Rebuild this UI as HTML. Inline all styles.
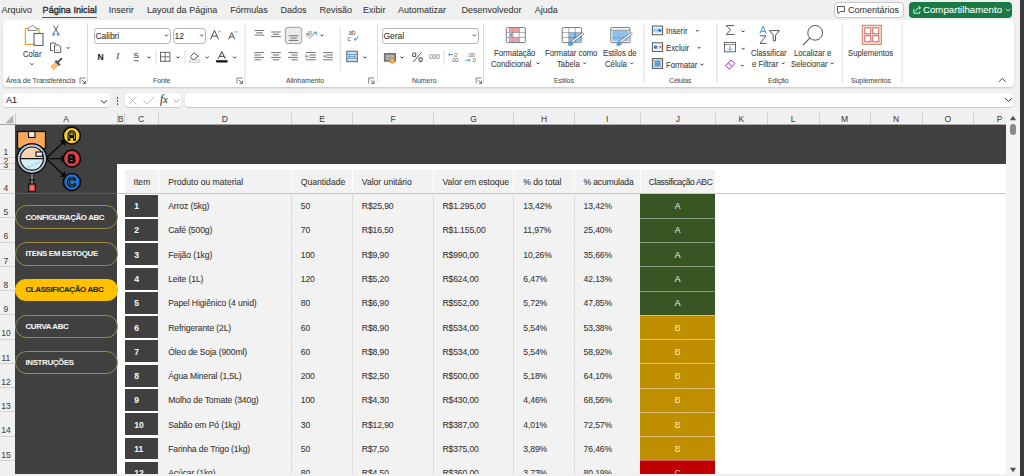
<!DOCTYPE html>
<html><head><meta charset="utf-8"><style>
html,body{margin:0;padding:0;}
body{width:1024px;height:476px;overflow:hidden;position:relative;background:#f0f0f0;font-family:"Liberation Sans", sans-serif;}
.t{position:absolute;white-space:pre;line-height:1;-webkit-text-stroke:0.08px currentColor;}
.r{position:absolute;}
</style></head><body>
<div class="t" style="left:1.6px;top:6.28px;font-size:9px;font-weight:400;color:#3b3b3b;">Arquivo</div>
<div class="t" style="left:42.6px;top:6.28px;font-size:9px;font-weight:400;color:#2a2a2a;letter-spacing:0.05px;-webkit-text-stroke:0.35px #2a2a2a;">Página Inicial</div>
<div class="t" style="left:108.7px;top:6.28px;font-size:9px;font-weight:400;color:#3b3b3b;">Inserir</div>
<div class="t" style="left:147.1px;top:6.28px;font-size:9px;font-weight:400;color:#3b3b3b;">Layout da Página</div>
<div class="t" style="left:230.3px;top:6.28px;font-size:9px;font-weight:400;color:#3b3b3b;">Fórmulas</div>
<div class="t" style="left:280.5px;top:6.28px;font-size:9px;font-weight:400;color:#3b3b3b;">Dados</div>
<div class="t" style="left:319.5px;top:6.28px;font-size:9px;font-weight:400;color:#3b3b3b;">Revisão</div>
<div class="t" style="left:363px;top:6.28px;font-size:9px;font-weight:400;color:#3b3b3b;">Exibir</div>
<div class="t" style="left:398px;top:6.28px;font-size:9px;font-weight:400;color:#3b3b3b;">Automatizar</div>
<div class="t" style="left:461.5px;top:6.28px;font-size:9px;font-weight:400;color:#3b3b3b;">Desenvolvedor</div>
<div class="t" style="left:534.8px;top:6.28px;font-size:9px;font-weight:400;color:#3b3b3b;">Ajuda</div>
<div class="r" style="left:42.3px;top:16.6px;width:54.8px;height:1.6px;background:#1e7145;border-radius:1px;"></div>
<div class="r" style="left:833.5px;top:2px;width:70px;height:15.5px;background:#fff;border:1px solid #c9c9c9;border-radius:4px;box-sizing:border-box;"></div>
<svg class="r" style="left:836px;top:5px" width="10" height="10" viewBox="0 0 10 10"><path d="M1.5 1.5h7v5h-4l-2.5 2v-2h-0.5z" fill="none" stroke="#444" stroke-width="0.9"/></svg>
<div class="t" style="left:847.6px;top:5.09px;font-size:9.7px;font-weight:400;color:#3a3a3a;transform:scaleX(0.93);transform-origin:0 0;">Comentários</div>
<div class="r" style="left:909.4px;top:2px;width:102.2px;height:15.6px;background:#1a7a43;border-radius:4px;"></div>
<svg class="r" style="left:912.5px;top:5px" width="9" height="9" viewBox="0 0 9 9"><path d="M0.8 4.2v4h6v-1.8" fill="none" stroke="#fff" stroke-width="0.9"/><path d="M2.8 6.2c0-2.4 1.8-3.4 4.2-3.4M5.8 1.2l1.8 1.6-1.8 1.6" fill="none" stroke="#fff" stroke-width="0.9"/></svg>
<div class="t" style="left:922.8px;top:5.02px;font-size:9.9px;font-weight:400;color:#fff;transform:scaleX(0.98);transform-origin:0 0;">Compartilhamento</div>
<svg class="r" style="left:1005px;top:8px" width="6" height="4" viewBox="0 0 6 4"><path d="M0.8 0.8l2.2 2.2 2.2-2.2" fill="none" stroke="#fff" stroke-width="0.9"/></svg>
<div class="r" style="left:2.5px;top:20px;width:1011px;height:66.5px;background:#fff;border-radius:4.5px;box-shadow:0 1px 2px rgba(0,0,0,0.18);"></div>
<div class="r" style="left:2.8px;top:93px;width:107.2px;height:14px;background:#fff;border-radius:4px;box-shadow:0 0.6px 1px rgba(0,0,0,0.16);"></div>
<div class="t" style="left:6px;top:95.98px;font-size:9px;font-weight:400;color:#222;">A1</div>
<svg class="r" style="left:100px;top:98.5px" width="8" height="6" viewBox="0 0 8 6"><path d="M1 1.2l3 3 3-3" fill="none" stroke="#333" stroke-width="1"/></svg>
<div class="r" style="left:116.5px;top:97.2px;width:1.7px;height:1.7px;background:#333;border-radius:1px;"></div>
<div class="r" style="left:116.5px;top:100.2px;width:1.7px;height:1.7px;background:#333;border-radius:1px;"></div>
<div class="r" style="left:116.5px;top:103.2px;width:1.7px;height:1.7px;background:#333;border-radius:1px;"></div>
<div class="r" style="left:124.7px;top:93px;width:56.7px;height:14px;background:#fff;border-radius:4px;box-shadow:0 0.6px 1px rgba(0,0,0,0.16);"></div>
<svg class="r" style="left:127px;top:95px" width="56" height="11" viewBox="0 0 56 11"><path d="M1.5 1.5l8 8M9.5 1.5l-8 8" stroke="#bdbdbd" stroke-width="0.9" fill="none"/><path d="M16.5 5.5l3.5 3.5 7.5-7.5" stroke="#bdbdbd" stroke-width="0.9" fill="none"/><path d="M46.8 4.4l2.8 2.8 2.8-2.8" stroke="#999" stroke-width="0.9" fill="none"/></svg>
<div class="t" style="left:160px;top:94.47px;font-size:11.5px;font-weight:400;color:#333;font-family:'Liberation Serif',serif;font-style:italic;">f<span style="font-size:10px">x</span></div>
<div class="r" style="left:185.3px;top:93px;width:827.7px;height:14px;background:#fff;border-radius:4px;box-shadow:0 0.6px 1px rgba(0,0,0,0.16);"></div>
<svg class="r" style="left:1004px;top:97px" width="9" height="6" viewBox="0 0 9 6"><path d="M1 1.2l3.5 3.3 3.5-3.3" fill="none" stroke="#333" stroke-width="1"/></svg>
<div class="r" style="left:0px;top:113px;width:1005.5px;height:12px;background:#f0f0f0;"></div>
<svg class="r" style="left:4px;top:114px" width="10" height="10" viewBox="0 0 10 10"><path d="M1 9.3L9.3 1V9.3z" fill="#b5b5b5"/></svg>
<div class="r" style="left:116.5px;top:113px;width:1px;height:12px;background:#cfcfcf;"></div>
<div class="t" style="left:15px;width:102px;text-align:center;top:115.40px;font-size:8.5px;font-weight:400;color:#444;">A</div>
<div class="r" style="left:123.5px;top:113px;width:1px;height:12px;background:#cfcfcf;"></div>
<div class="t" style="left:117px;width:7px;text-align:center;top:115.40px;font-size:8.5px;font-weight:400;color:#444;">B</div>
<div class="r" style="left:157.5px;top:113px;width:1px;height:12px;background:#cfcfcf;"></div>
<div class="t" style="left:124px;width:34px;text-align:center;top:115.40px;font-size:8.5px;font-weight:400;color:#444;">C</div>
<div class="r" style="left:291.0px;top:113px;width:1px;height:12px;background:#cfcfcf;"></div>
<div class="t" style="left:158px;width:133.5px;text-align:center;top:115.40px;font-size:8.5px;font-weight:400;color:#444;">D</div>
<div class="r" style="left:352.0px;top:113px;width:1px;height:12px;background:#cfcfcf;"></div>
<div class="t" style="left:291.5px;width:61.0px;text-align:center;top:115.40px;font-size:8.5px;font-weight:400;color:#444;">E</div>
<div class="r" style="left:433.0px;top:113px;width:1px;height:12px;background:#cfcfcf;"></div>
<div class="t" style="left:352.5px;width:81.0px;text-align:center;top:115.40px;font-size:8.5px;font-weight:400;color:#444;">F</div>
<div class="r" style="left:513.0px;top:113px;width:1px;height:12px;background:#cfcfcf;"></div>
<div class="t" style="left:433.5px;width:80.0px;text-align:center;top:115.40px;font-size:8.5px;font-weight:400;color:#444;">G</div>
<div class="r" style="left:574.0px;top:113px;width:1px;height:12px;background:#cfcfcf;"></div>
<div class="t" style="left:513.5px;width:61.0px;text-align:center;top:115.40px;font-size:8.5px;font-weight:400;color:#444;">H</div>
<div class="r" style="left:639.5px;top:113px;width:1px;height:12px;background:#cfcfcf;"></div>
<div class="t" style="left:574.5px;width:65.5px;text-align:center;top:115.40px;font-size:8.5px;font-weight:400;color:#444;">I</div>
<div class="r" style="left:715.0px;top:113px;width:1px;height:12px;background:#cfcfcf;"></div>
<div class="t" style="left:640px;width:75.5px;text-align:center;top:115.40px;font-size:8.5px;font-weight:400;color:#444;">J</div>
<div class="r" style="left:766.5px;top:113px;width:1px;height:12px;background:#cfcfcf;"></div>
<div class="t" style="left:715.5px;width:51.5px;text-align:center;top:115.40px;font-size:8.5px;font-weight:400;color:#444;">K</div>
<div class="r" style="left:818.5px;top:113px;width:1px;height:12px;background:#cfcfcf;"></div>
<div class="t" style="left:767px;width:52px;text-align:center;top:115.40px;font-size:8.5px;font-weight:400;color:#444;">L</div>
<div class="r" style="left:869.5px;top:113px;width:1px;height:12px;background:#cfcfcf;"></div>
<div class="t" style="left:819px;width:51px;text-align:center;top:115.40px;font-size:8.5px;font-weight:400;color:#444;">M</div>
<div class="r" style="left:921.5px;top:113px;width:1px;height:12px;background:#cfcfcf;"></div>
<div class="t" style="left:870px;width:52px;text-align:center;top:115.40px;font-size:8.5px;font-weight:400;color:#444;">N</div>
<div class="r" style="left:973.2px;top:113px;width:1px;height:12px;background:#cfcfcf;"></div>
<div class="t" style="left:922px;width:51.700000000000045px;text-align:center;top:115.40px;font-size:8.5px;font-weight:400;color:#444;">O</div>
<div class="t" style="left:973.7px;width:52px;text-align:center;top:115.40px;font-size:8.5px;font-weight:400;color:#444;">P</div>
<div class="r" style="left:14.5px;top:113px;width:1px;height:12px;background:#cfcfcf;"></div>
<div class="r" style="left:0px;top:124px;width:1005.5px;height:1px;background:#a6a6a6;"></div>
<div class="r" style="left:0px;top:125px;width:15px;height:351px;background:#f0f0f0;"></div>
<div class="r" style="left:0;top:125px;width:15px;height:32.5px;overflow:hidden;"><div class="t" style="left:0;width:11.8px;text-align:center;top:22.90px;font-size:8.5px;color:#444;">1</div></div>
<div class="r" style="left:0px;top:157.0px;width:15px;height:1px;background:#d2d2d2;"></div>
<div class="r" style="left:0;top:157.5px;width:15px;height:5.5px;overflow:hidden;"><div class="t" style="left:0;width:11.8px;text-align:center;top:-0.20px;font-size:8.5px;color:#444;">2</div></div>
<div class="r" style="left:0px;top:162.5px;width:15px;height:1px;background:#d2d2d2;"></div>
<div class="r" style="left:0;top:163px;width:15px;height:6px;overflow:hidden;"><div class="t" style="left:0;width:11.8px;text-align:center;top:-2.40px;font-size:8.5px;color:#444;">3</div></div>
<div class="r" style="left:0px;top:168.5px;width:15px;height:1px;background:#d2d2d2;"></div>
<div class="r" style="left:0;top:169px;width:15px;height:24.5px;overflow:hidden;"><div class="t" style="left:0;width:11.8px;text-align:center;top:14.90px;font-size:8.5px;color:#444;">4</div></div>
<div class="r" style="left:0px;top:193.0px;width:15px;height:1px;background:#d2d2d2;"></div>
<div class="r" style="left:0;top:193.5px;width:15px;height:24.25999999999999px;overflow:hidden;"><div class="t" style="left:0;width:11.8px;text-align:center;top:14.66px;font-size:8.5px;color:#444;">5</div></div>
<div class="r" style="left:0px;top:217.26px;width:15px;height:1px;background:#d2d2d2;"></div>
<div class="r" style="left:0;top:217.76px;width:15px;height:24.26000000000002px;overflow:hidden;"><div class="t" style="left:0;width:11.8px;text-align:center;top:14.66px;font-size:8.5px;color:#444;">6</div></div>
<div class="r" style="left:0px;top:241.52px;width:15px;height:1px;background:#d2d2d2;"></div>
<div class="r" style="left:0;top:242.02px;width:15px;height:24.259999999999962px;overflow:hidden;"><div class="t" style="left:0;width:11.8px;text-align:center;top:14.66px;font-size:8.5px;color:#444;">7</div></div>
<div class="r" style="left:0px;top:265.78px;width:15px;height:1px;background:#d2d2d2;"></div>
<div class="r" style="left:0;top:266.28px;width:15px;height:24.260000000000048px;overflow:hidden;"><div class="t" style="left:0;width:11.8px;text-align:center;top:14.66px;font-size:8.5px;color:#444;">8</div></div>
<div class="r" style="left:0px;top:290.04px;width:15px;height:1px;background:#d2d2d2;"></div>
<div class="r" style="left:0;top:290.54px;width:15px;height:24.25999999999999px;overflow:hidden;"><div class="t" style="left:0;width:11.8px;text-align:center;top:14.66px;font-size:8.5px;color:#444;">9</div></div>
<div class="r" style="left:0px;top:314.3px;width:15px;height:1px;background:#d2d2d2;"></div>
<div class="r" style="left:0;top:314.8px;width:15px;height:24.25999999999999px;overflow:hidden;"><div class="t" style="left:0;width:11.8px;text-align:center;top:14.66px;font-size:8.5px;color:#444;">10</div></div>
<div class="r" style="left:0px;top:338.56px;width:15px;height:1px;background:#d2d2d2;"></div>
<div class="r" style="left:0;top:339.06px;width:15px;height:24.25999999999999px;overflow:hidden;"><div class="t" style="left:0;width:11.8px;text-align:center;top:14.66px;font-size:8.5px;color:#444;">11</div></div>
<div class="r" style="left:0px;top:362.82px;width:15px;height:1px;background:#d2d2d2;"></div>
<div class="r" style="left:0;top:363.32px;width:15px;height:24.25999999999999px;overflow:hidden;"><div class="t" style="left:0;width:11.8px;text-align:center;top:14.66px;font-size:8.5px;color:#444;">12</div></div>
<div class="r" style="left:0px;top:387.08px;width:15px;height:1px;background:#d2d2d2;"></div>
<div class="r" style="left:0;top:387.58px;width:15px;height:24.25999999999999px;overflow:hidden;"><div class="t" style="left:0;width:11.8px;text-align:center;top:14.66px;font-size:8.5px;color:#444;">13</div></div>
<div class="r" style="left:0px;top:411.34px;width:15px;height:1px;background:#d2d2d2;"></div>
<div class="r" style="left:0;top:411.84px;width:15px;height:24.260000000000048px;overflow:hidden;"><div class="t" style="left:0;width:11.8px;text-align:center;top:14.66px;font-size:8.5px;color:#444;">14</div></div>
<div class="r" style="left:0px;top:435.6px;width:15px;height:1px;background:#d2d2d2;"></div>
<div class="r" style="left:0;top:436.1px;width:15px;height:24.25999999999999px;overflow:hidden;"><div class="t" style="left:0;width:11.8px;text-align:center;top:14.66px;font-size:8.5px;color:#444;">15</div></div>
<div class="r" style="left:0px;top:459.86px;width:15px;height:1px;background:#d2d2d2;"></div>
<div class="r" style="left:0;top:460.36px;width:15px;height:24.25999999999999px;overflow:hidden;"><div class="t" style="left:0;width:11.8px;text-align:center;top:14.66px;font-size:8.5px;color:#444;">16</div></div>
<div class="r" style="left:0px;top:484.12px;width:15px;height:1px;background:#d2d2d2;"></div>
<div class="r" style="left:14.5px;top:125px;width:1px;height:351px;background:#c8c8c8;"></div>
<div class="r" style="left:15px;top:125px;width:990.5px;height:351px;background:#fff;"></div>
<div class="r" style="left:15px;top:125px;width:990.5px;height:38.5px;background:#404040;"></div>
<div class="r" style="left:15px;top:125px;width:102px;height:351px;background:#404040;"></div>
<div class="r" style="left:117px;top:193px;width:888.5px;height:1px;background:#c6c6c6;"></div>
<div class="r" style="left:15px;top:193px;width:102px;height:1px;background:#5a5a5a;"></div>
<div class="r" style="left:125.3px;top:170px;width:32.500000000000014px;height:23px;background:#f2f2f2;"></div>
<div class="r" style="left:158.8px;top:170px;width:132.2px;height:23px;background:#f2f2f2;"></div>
<div class="r" style="left:292px;top:170px;width:60px;height:23px;background:#f2f2f2;"></div>
<div class="r" style="left:353px;top:170px;width:80px;height:23px;background:#f2f2f2;"></div>
<div class="r" style="left:434px;top:170px;width:79px;height:23px;background:#f2f2f2;"></div>
<div class="r" style="left:514px;top:170px;width:60px;height:23px;background:#f2f2f2;"></div>
<div class="r" style="left:575px;top:170px;width:64.5px;height:23px;background:#f2f2f2;"></div>
<div class="r" style="left:640.5px;top:170px;width:74.5px;height:23px;background:#f2f2f2;"></div>
<div class="t" style="left:133.6px;top:177.72px;font-size:8.6px;font-weight:400;color:#363636;letter-spacing:0px;">Item</div>
<div class="t" style="left:168.2px;top:177.72px;font-size:8.6px;font-weight:400;color:#363636;letter-spacing:0px;">Produto ou material</div>
<div class="t" style="left:300.8px;top:177.72px;font-size:8.6px;font-weight:400;color:#363636;letter-spacing:0px;">Quantidade</div>
<div class="t" style="left:361.8px;top:177.72px;font-size:8.6px;font-weight:400;color:#363636;letter-spacing:0px;">Valor unitário</div>
<div class="t" style="left:442.4px;top:177.72px;font-size:8.6px;font-weight:400;color:#363636;letter-spacing:0px;">Valor em estoque</div>
<div class="t" style="left:523.3px;top:177.72px;font-size:8.6px;font-weight:400;color:#363636;letter-spacing:0px;">% do total</div>
<div class="t" style="left:583.6px;top:177.72px;font-size:8.6px;font-weight:400;color:#363636;letter-spacing:-0.2px;">% acumulada</div>
<div class="t" style="left:648.8px;top:177.72px;font-size:8.6px;font-weight:400;color:#363636;letter-spacing:-0.38px;">Classificação ABC</div>
<div class="r" style="left:158px;top:193.5px;width:482px;height:282px;background:#f2f2f2;"></div>
<div class="r" style="left:291.0px;top:193.5px;width:1px;height:282px;background:#dddddd;"></div>
<div class="r" style="left:352.0px;top:193.5px;width:1px;height:282px;background:#dddddd;"></div>
<div class="r" style="left:433.0px;top:193.5px;width:1px;height:282px;background:#dddddd;"></div>
<div class="r" style="left:513.0px;top:193.5px;width:1px;height:282px;background:#dddddd;"></div>
<div class="r" style="left:574.0px;top:193.5px;width:1px;height:282px;background:#dddddd;"></div>
<div class="r" style="left:125px;top:194.9px;width:32.8px;height:21.95999999999998px;background:#404040;"></div>
<div class="r" style="left:158px;top:216.76px;width:482px;height:1px;background:repeating-linear-gradient(90deg,#fcfcfc 0 1px,#e0e0e0 1px 2px);"></div>
<div class="r" style="left:639.8px;top:194.0px;width:75.4px;height:24.26px;background:#375623;"></div>
<div class="t" style="left:134.2px;top:202.22px;font-size:8.6px;font-weight:700;color:#f2f2f2;">1</div>
<div class="t" style="left:168.2px;top:202.22px;font-size:8.6px;font-weight:400;color:#363636;letter-spacing:-0.12px;">Arroz (5kg)</div>
<div class="t" style="left:300.8px;top:202.22px;font-size:8.6px;font-weight:400;color:#363636;letter-spacing:-0.12px;">50</div>
<div class="t" style="left:361.8px;top:202.22px;font-size:8.6px;font-weight:400;color:#363636;letter-spacing:-0.12px;">R$25,90</div>
<div class="t" style="left:442.4px;top:202.22px;font-size:8.6px;font-weight:400;color:#363636;letter-spacing:-0.12px;">R$1.295,00</div>
<div class="t" style="left:523.3px;top:202.22px;font-size:8.6px;font-weight:400;color:#363636;letter-spacing:-0.12px;">13,42%</div>
<div class="t" style="left:583.6px;top:202.22px;font-size:8.6px;font-weight:400;color:#363636;letter-spacing:-0.12px;">13,42%</div>
<div class="t" style="left:639.8px;width:75.4px;text-align:center;top:202.22px;font-size:8.6px;font-weight:400;color:#e6e6e6;">A</div>
<div class="r" style="left:125px;top:219.16px;width:32.8px;height:21.95999999999998px;background:#404040;"></div>
<div class="r" style="left:158px;top:241.01999999999998px;width:482px;height:1px;background:repeating-linear-gradient(90deg,#fcfcfc 0 1px,#e0e0e0 1px 2px);"></div>
<div class="r" style="left:639.8px;top:218.26px;width:75.4px;height:24.26px;background:#375623;"></div>
<div class="r" style="left:639.8px;top:217.76px;width:75.4px;height:1px;background:#8a9c80;"></div>
<div class="t" style="left:134.2px;top:226.48px;font-size:8.6px;font-weight:700;color:#f2f2f2;">2</div>
<div class="t" style="left:168.2px;top:226.48px;font-size:8.6px;font-weight:400;color:#363636;letter-spacing:-0.12px;">Café (500g)</div>
<div class="t" style="left:300.8px;top:226.48px;font-size:8.6px;font-weight:400;color:#363636;letter-spacing:-0.12px;">70</div>
<div class="t" style="left:361.8px;top:226.48px;font-size:8.6px;font-weight:400;color:#363636;letter-spacing:-0.12px;">R$16,50</div>
<div class="t" style="left:442.4px;top:226.48px;font-size:8.6px;font-weight:400;color:#363636;letter-spacing:-0.12px;">R$1.155,00</div>
<div class="t" style="left:523.3px;top:226.48px;font-size:8.6px;font-weight:400;color:#363636;letter-spacing:-0.12px;">11,97%</div>
<div class="t" style="left:583.6px;top:226.48px;font-size:8.6px;font-weight:400;color:#363636;letter-spacing:-0.12px;">25,40%</div>
<div class="t" style="left:639.8px;width:75.4px;text-align:center;top:226.48px;font-size:8.6px;font-weight:400;color:#e6e6e6;">A</div>
<div class="r" style="left:125px;top:243.42000000000002px;width:32.8px;height:21.960000000000036px;background:#404040;"></div>
<div class="r" style="left:158px;top:265.28000000000003px;width:482px;height:1px;background:repeating-linear-gradient(90deg,#fcfcfc 0 1px,#e0e0e0 1px 2px);"></div>
<div class="r" style="left:639.8px;top:242.52px;width:75.4px;height:24.26px;background:#375623;"></div>
<div class="r" style="left:639.8px;top:242.02px;width:75.4px;height:1px;background:#8a9c80;"></div>
<div class="t" style="left:134.2px;top:250.74px;font-size:8.6px;font-weight:700;color:#f2f2f2;">3</div>
<div class="t" style="left:168.2px;top:250.74px;font-size:8.6px;font-weight:400;color:#363636;letter-spacing:-0.12px;">Feijão (1kg)</div>
<div class="t" style="left:300.8px;top:250.74px;font-size:8.6px;font-weight:400;color:#363636;letter-spacing:-0.12px;">100</div>
<div class="t" style="left:361.8px;top:250.74px;font-size:8.6px;font-weight:400;color:#363636;letter-spacing:-0.12px;">R$9,90</div>
<div class="t" style="left:442.4px;top:250.74px;font-size:8.6px;font-weight:400;color:#363636;letter-spacing:-0.12px;">R$990,00</div>
<div class="t" style="left:523.3px;top:250.74px;font-size:8.6px;font-weight:400;color:#363636;letter-spacing:-0.12px;">10,26%</div>
<div class="t" style="left:583.6px;top:250.74px;font-size:8.6px;font-weight:400;color:#363636;letter-spacing:-0.12px;">35,66%</div>
<div class="t" style="left:639.8px;width:75.4px;text-align:center;top:250.74px;font-size:8.6px;font-weight:400;color:#e6e6e6;">A</div>
<div class="r" style="left:125px;top:267.67999999999995px;width:32.8px;height:21.960000000000036px;background:#404040;"></div>
<div class="r" style="left:158px;top:289.53999999999996px;width:482px;height:1px;background:repeating-linear-gradient(90deg,#fcfcfc 0 1px,#e0e0e0 1px 2px);"></div>
<div class="r" style="left:639.8px;top:266.78px;width:75.4px;height:24.26px;background:#375623;"></div>
<div class="r" style="left:639.8px;top:266.28px;width:75.4px;height:1px;background:#8a9c80;"></div>
<div class="t" style="left:134.2px;top:275.00px;font-size:8.6px;font-weight:700;color:#f2f2f2;">4</div>
<div class="t" style="left:168.2px;top:275.00px;font-size:8.6px;font-weight:400;color:#363636;letter-spacing:-0.12px;">Leite (1L)</div>
<div class="t" style="left:300.8px;top:275.00px;font-size:8.6px;font-weight:400;color:#363636;letter-spacing:-0.12px;">120</div>
<div class="t" style="left:361.8px;top:275.00px;font-size:8.6px;font-weight:400;color:#363636;letter-spacing:-0.12px;">R$5,20</div>
<div class="t" style="left:442.4px;top:275.00px;font-size:8.6px;font-weight:400;color:#363636;letter-spacing:-0.12px;">R$624,00</div>
<div class="t" style="left:523.3px;top:275.00px;font-size:8.6px;font-weight:400;color:#363636;letter-spacing:-0.12px;">6,47%</div>
<div class="t" style="left:583.6px;top:275.00px;font-size:8.6px;font-weight:400;color:#363636;letter-spacing:-0.12px;">42,13%</div>
<div class="t" style="left:639.8px;width:75.4px;text-align:center;top:275.00px;font-size:8.6px;font-weight:400;color:#e6e6e6;">A</div>
<div class="r" style="left:125px;top:291.94px;width:32.8px;height:21.960000000000036px;background:#404040;"></div>
<div class="r" style="left:158px;top:313.8px;width:482px;height:1px;background:repeating-linear-gradient(90deg,#fcfcfc 0 1px,#e0e0e0 1px 2px);"></div>
<div class="r" style="left:639.8px;top:291.04px;width:75.4px;height:24.26px;background:#375623;"></div>
<div class="r" style="left:639.8px;top:290.54px;width:75.4px;height:1px;background:#8a9c80;"></div>
<div class="t" style="left:134.2px;top:299.26px;font-size:8.6px;font-weight:700;color:#f2f2f2;">5</div>
<div class="t" style="left:168.2px;top:299.26px;font-size:8.6px;font-weight:400;color:#363636;letter-spacing:-0.12px;">Papel Higiênico (4 unid)</div>
<div class="t" style="left:300.8px;top:299.26px;font-size:8.6px;font-weight:400;color:#363636;letter-spacing:-0.12px;">80</div>
<div class="t" style="left:361.8px;top:299.26px;font-size:8.6px;font-weight:400;color:#363636;letter-spacing:-0.12px;">R$6,90</div>
<div class="t" style="left:442.4px;top:299.26px;font-size:8.6px;font-weight:400;color:#363636;letter-spacing:-0.12px;">R$552,00</div>
<div class="t" style="left:523.3px;top:299.26px;font-size:8.6px;font-weight:400;color:#363636;letter-spacing:-0.12px;">5,72%</div>
<div class="t" style="left:583.6px;top:299.26px;font-size:8.6px;font-weight:400;color:#363636;letter-spacing:-0.12px;">47,85%</div>
<div class="t" style="left:639.8px;width:75.4px;text-align:center;top:299.26px;font-size:8.6px;font-weight:400;color:#e6e6e6;">A</div>
<div class="r" style="left:125px;top:316.2px;width:32.8px;height:21.960000000000036px;background:#404040;"></div>
<div class="r" style="left:158px;top:338.06px;width:482px;height:1px;background:repeating-linear-gradient(90deg,#fcfcfc 0 1px,#e0e0e0 1px 2px);"></div>
<div class="r" style="left:639.8px;top:315.3px;width:75.4px;height:24.26px;background:#bf8f00;"></div>
<div class="r" style="left:639.8px;top:314.8px;width:75.4px;height:1px;background:#dcc070;"></div>
<div class="t" style="left:134.2px;top:323.52px;font-size:8.6px;font-weight:700;color:#f2f2f2;">6</div>
<div class="t" style="left:168.2px;top:323.52px;font-size:8.6px;font-weight:400;color:#363636;letter-spacing:-0.12px;">Refrigerante (2L)</div>
<div class="t" style="left:300.8px;top:323.52px;font-size:8.6px;font-weight:400;color:#363636;letter-spacing:-0.12px;">60</div>
<div class="t" style="left:361.8px;top:323.52px;font-size:8.6px;font-weight:400;color:#363636;letter-spacing:-0.12px;">R$8,90</div>
<div class="t" style="left:442.4px;top:323.52px;font-size:8.6px;font-weight:400;color:#363636;letter-spacing:-0.12px;">R$534,00</div>
<div class="t" style="left:523.3px;top:323.52px;font-size:8.6px;font-weight:400;color:#363636;letter-spacing:-0.12px;">5,54%</div>
<div class="t" style="left:583.6px;top:323.52px;font-size:8.6px;font-weight:400;color:#363636;letter-spacing:-0.12px;">53,38%</div>
<div class="t" style="left:639.8px;width:75.4px;text-align:center;top:323.52px;font-size:8.6px;font-weight:400;color:#f6e4a6;">B</div>
<div class="r" style="left:125px;top:340.46px;width:32.8px;height:21.960000000000036px;background:#404040;"></div>
<div class="r" style="left:158px;top:362.32px;width:482px;height:1px;background:repeating-linear-gradient(90deg,#fcfcfc 0 1px,#e0e0e0 1px 2px);"></div>
<div class="r" style="left:639.8px;top:339.56px;width:75.4px;height:24.26px;background:#bf8f00;"></div>
<div class="r" style="left:639.8px;top:339.06px;width:75.4px;height:1px;background:#dcc070;"></div>
<div class="t" style="left:134.2px;top:347.78px;font-size:8.6px;font-weight:700;color:#f2f2f2;">7</div>
<div class="t" style="left:168.2px;top:347.78px;font-size:8.6px;font-weight:400;color:#363636;letter-spacing:-0.12px;">Óleo de Soja (900ml)</div>
<div class="t" style="left:300.8px;top:347.78px;font-size:8.6px;font-weight:400;color:#363636;letter-spacing:-0.12px;">60</div>
<div class="t" style="left:361.8px;top:347.78px;font-size:8.6px;font-weight:400;color:#363636;letter-spacing:-0.12px;">R$8,90</div>
<div class="t" style="left:442.4px;top:347.78px;font-size:8.6px;font-weight:400;color:#363636;letter-spacing:-0.12px;">R$534,00</div>
<div class="t" style="left:523.3px;top:347.78px;font-size:8.6px;font-weight:400;color:#363636;letter-spacing:-0.12px;">5,54%</div>
<div class="t" style="left:583.6px;top:347.78px;font-size:8.6px;font-weight:400;color:#363636;letter-spacing:-0.12px;">58,92%</div>
<div class="t" style="left:639.8px;width:75.4px;text-align:center;top:347.78px;font-size:8.6px;font-weight:400;color:#f6e4a6;">B</div>
<div class="r" style="left:125px;top:364.72px;width:32.8px;height:21.960000000000036px;background:#404040;"></div>
<div class="r" style="left:158px;top:386.58000000000004px;width:482px;height:1px;background:repeating-linear-gradient(90deg,#fcfcfc 0 1px,#e0e0e0 1px 2px);"></div>
<div class="r" style="left:639.8px;top:363.82000000000005px;width:75.4px;height:24.26px;background:#bf8f00;"></div>
<div class="r" style="left:639.8px;top:363.32000000000005px;width:75.4px;height:1px;background:#dcc070;"></div>
<div class="t" style="left:134.2px;top:372.04px;font-size:8.6px;font-weight:700;color:#f2f2f2;">8</div>
<div class="t" style="left:168.2px;top:372.04px;font-size:8.6px;font-weight:400;color:#363636;letter-spacing:-0.12px;">Água Mineral (1,5L)</div>
<div class="t" style="left:300.8px;top:372.04px;font-size:8.6px;font-weight:400;color:#363636;letter-spacing:-0.12px;">200</div>
<div class="t" style="left:361.8px;top:372.04px;font-size:8.6px;font-weight:400;color:#363636;letter-spacing:-0.12px;">R$2,50</div>
<div class="t" style="left:442.4px;top:372.04px;font-size:8.6px;font-weight:400;color:#363636;letter-spacing:-0.12px;">R$500,00</div>
<div class="t" style="left:523.3px;top:372.04px;font-size:8.6px;font-weight:400;color:#363636;letter-spacing:-0.12px;">5,18%</div>
<div class="t" style="left:583.6px;top:372.04px;font-size:8.6px;font-weight:400;color:#363636;letter-spacing:-0.12px;">64,10%</div>
<div class="t" style="left:639.8px;width:75.4px;text-align:center;top:372.04px;font-size:8.6px;font-weight:400;color:#f6e4a6;">B</div>
<div class="r" style="left:125px;top:388.98px;width:32.8px;height:21.960000000000036px;background:#404040;"></div>
<div class="r" style="left:158px;top:410.84000000000003px;width:482px;height:1px;background:repeating-linear-gradient(90deg,#fcfcfc 0 1px,#e0e0e0 1px 2px);"></div>
<div class="r" style="left:639.8px;top:388.08000000000004px;width:75.4px;height:24.26px;background:#bf8f00;"></div>
<div class="r" style="left:639.8px;top:387.58000000000004px;width:75.4px;height:1px;background:#dcc070;"></div>
<div class="t" style="left:134.2px;top:396.30px;font-size:8.6px;font-weight:700;color:#f2f2f2;">9</div>
<div class="t" style="left:168.2px;top:396.30px;font-size:8.6px;font-weight:400;color:#363636;letter-spacing:-0.12px;">Molho de Tomate (340g)</div>
<div class="t" style="left:300.8px;top:396.30px;font-size:8.6px;font-weight:400;color:#363636;letter-spacing:-0.12px;">100</div>
<div class="t" style="left:361.8px;top:396.30px;font-size:8.6px;font-weight:400;color:#363636;letter-spacing:-0.12px;">R$4,30</div>
<div class="t" style="left:442.4px;top:396.30px;font-size:8.6px;font-weight:400;color:#363636;letter-spacing:-0.12px;">R$430,00</div>
<div class="t" style="left:523.3px;top:396.30px;font-size:8.6px;font-weight:400;color:#363636;letter-spacing:-0.12px;">4,46%</div>
<div class="t" style="left:583.6px;top:396.30px;font-size:8.6px;font-weight:400;color:#363636;letter-spacing:-0.12px;">68,56%</div>
<div class="t" style="left:639.8px;width:75.4px;text-align:center;top:396.30px;font-size:8.6px;font-weight:400;color:#f6e4a6;">B</div>
<div class="r" style="left:125px;top:413.24px;width:32.8px;height:21.960000000000036px;background:#404040;"></div>
<div class="r" style="left:158px;top:435.1px;width:482px;height:1px;background:repeating-linear-gradient(90deg,#fcfcfc 0 1px,#e0e0e0 1px 2px);"></div>
<div class="r" style="left:639.8px;top:412.34000000000003px;width:75.4px;height:24.26px;background:#bf8f00;"></div>
<div class="r" style="left:639.8px;top:411.84000000000003px;width:75.4px;height:1px;background:#dcc070;"></div>
<div class="t" style="left:134.2px;top:420.56px;font-size:8.6px;font-weight:700;color:#f2f2f2;">10</div>
<div class="t" style="left:168.2px;top:420.56px;font-size:8.6px;font-weight:400;color:#363636;letter-spacing:-0.12px;">Sabão em Pó (1kg)</div>
<div class="t" style="left:300.8px;top:420.56px;font-size:8.6px;font-weight:400;color:#363636;letter-spacing:-0.12px;">30</div>
<div class="t" style="left:361.8px;top:420.56px;font-size:8.6px;font-weight:400;color:#363636;letter-spacing:-0.12px;">R$12,90</div>
<div class="t" style="left:442.4px;top:420.56px;font-size:8.6px;font-weight:400;color:#363636;letter-spacing:-0.12px;">R$387,00</div>
<div class="t" style="left:523.3px;top:420.56px;font-size:8.6px;font-weight:400;color:#363636;letter-spacing:-0.12px;">4,01%</div>
<div class="t" style="left:583.6px;top:420.56px;font-size:8.6px;font-weight:400;color:#363636;letter-spacing:-0.12px;">72,57%</div>
<div class="t" style="left:639.8px;width:75.4px;text-align:center;top:420.56px;font-size:8.6px;font-weight:400;color:#f6e4a6;">B</div>
<div class="r" style="left:125px;top:437.5px;width:32.8px;height:21.960000000000036px;background:#404040;"></div>
<div class="r" style="left:158px;top:459.36px;width:482px;height:1px;background:repeating-linear-gradient(90deg,#fcfcfc 0 1px,#e0e0e0 1px 2px);"></div>
<div class="r" style="left:639.8px;top:436.6px;width:75.4px;height:24.26px;background:#bf8f00;"></div>
<div class="r" style="left:639.8px;top:436.1px;width:75.4px;height:1px;background:#dcc070;"></div>
<div class="t" style="left:134.2px;top:444.82px;font-size:8.6px;font-weight:700;color:#f2f2f2;">11</div>
<div class="t" style="left:168.2px;top:444.82px;font-size:8.6px;font-weight:400;color:#363636;letter-spacing:-0.12px;">Farinha de Trigo (1kg)</div>
<div class="t" style="left:300.8px;top:444.82px;font-size:8.6px;font-weight:400;color:#363636;letter-spacing:-0.12px;">50</div>
<div class="t" style="left:361.8px;top:444.82px;font-size:8.6px;font-weight:400;color:#363636;letter-spacing:-0.12px;">R$7,50</div>
<div class="t" style="left:442.4px;top:444.82px;font-size:8.6px;font-weight:400;color:#363636;letter-spacing:-0.12px;">R$375,00</div>
<div class="t" style="left:523.3px;top:444.82px;font-size:8.6px;font-weight:400;color:#363636;letter-spacing:-0.12px;">3,89%</div>
<div class="t" style="left:583.6px;top:444.82px;font-size:8.6px;font-weight:400;color:#363636;letter-spacing:-0.12px;">76,46%</div>
<div class="t" style="left:639.8px;width:75.4px;text-align:center;top:444.82px;font-size:8.6px;font-weight:400;color:#f6e4a6;">B</div>
<div class="r" style="left:125px;top:461.76px;width:32.8px;height:21.960000000000036px;background:#404040;"></div>
<div class="r" style="left:158px;top:483.62px;width:482px;height:1px;background:repeating-linear-gradient(90deg,#fcfcfc 0 1px,#e0e0e0 1px 2px);"></div>
<div class="r" style="left:639.8px;top:460.86px;width:75.4px;height:24.26px;background:#c00000;"></div>
<div class="r" style="left:639.8px;top:460.36px;width:75.4px;height:1px;background:#d06060;"></div>
<div class="t" style="left:134.2px;top:469.08px;font-size:8.6px;font-weight:700;color:#f2f2f2;">12</div>
<div class="t" style="left:168.2px;top:469.08px;font-size:8.6px;font-weight:400;color:#363636;letter-spacing:-0.12px;">Açúcar (1kg)</div>
<div class="t" style="left:300.8px;top:469.08px;font-size:8.6px;font-weight:400;color:#363636;letter-spacing:-0.12px;">80</div>
<div class="t" style="left:361.8px;top:469.08px;font-size:8.6px;font-weight:400;color:#363636;letter-spacing:-0.12px;">R$4,50</div>
<div class="t" style="left:442.4px;top:469.08px;font-size:8.6px;font-weight:400;color:#363636;letter-spacing:-0.12px;">R$360,00</div>
<div class="t" style="left:523.3px;top:469.08px;font-size:8.6px;font-weight:400;color:#363636;letter-spacing:-0.12px;">3,73%</div>
<div class="t" style="left:583.6px;top:469.08px;font-size:8.6px;font-weight:400;color:#363636;letter-spacing:-0.12px;">80,19%</div>
<div class="t" style="left:639.8px;width:75.4px;text-align:center;top:469.08px;font-size:8.6px;font-weight:400;color:#f5c8c8;">C</div>
<div class="r" style="left:15px;top:205px;width:102.5px;height:24px;border:1.1px solid #a08a42;border-radius:12.0px;box-sizing:border-box;"></div>
<div class="t" style="left:25.5px;top:213.51px;font-size:7.9px;font-weight:700;color:#f2f2f2;letter-spacing:-0.35px;">CONFIGURAÇÃO ABC</div>
<div class="r" style="left:15px;top:242px;width:102.5px;height:23.5px;border:1.1px solid #a08a42;border-radius:11.75px;box-sizing:border-box;"></div>
<div class="t" style="left:25.5px;top:250.26px;font-size:7.9px;font-weight:700;color:#f2f2f2;letter-spacing:-0.35px;">ITENS EM ESTOQUE</div>
<div class="r" style="left:15px;top:278.8px;width:102.5px;height:22.0px;background:#ffc000;border-radius:11.0px;"></div>
<div class="t" style="left:25.5px;top:286.31px;font-size:7.9px;font-weight:700;color:#262626;letter-spacing:-0.35px;">CLASSIFICAÇÃO ABC</div>
<div class="r" style="left:15px;top:315px;width:102.5px;height:23px;border:1.1px solid #a08a42;border-radius:11.5px;box-sizing:border-box;"></div>
<div class="t" style="left:25.5px;top:323.01px;font-size:7.9px;font-weight:700;color:#f2f2f2;letter-spacing:-0.35px;">CURVA ABC</div>
<div class="r" style="left:15px;top:351px;width:102.5px;height:23px;border:1.1px solid #a08a42;border-radius:11.5px;box-sizing:border-box;"></div>
<div class="t" style="left:25.5px;top:359.01px;font-size:7.9px;font-weight:700;color:#f2f2f2;letter-spacing:-0.35px;">INSTRUÇÕES</div>
<div class="r" style="left:1005.5px;top:108px;width:14.5px;height:368px;background:#f4f4f4;"></div>
<svg class="r" style="left:1009px;top:115px" width="8" height="6" viewBox="0 0 8 6"><path d="M4 0.8L7.2 5.2H0.8z" fill="#555"/></svg>
<div class="r" style="left:1009.8px;top:124px;width:6px;height:11px;background:#8a8a8a;border-radius:3px;"></div>
<svg class="r" style="left:1009px;top:467px" width="8" height="6" viewBox="0 0 8 6"><path d="M0.8 0.8H7.2L4 5.2z" fill="#555"/></svg>
<div class="r" style="left:1020px;top:0px;width:4px;height:476px;background:#3a3a3a;"></div>
<div class="r" style="left:0px;top:474.3px;width:1020px;height:1.7px;background:#f0f0f0;"></div>
<svg class="r" style="left:14px;top:125px" width="72" height="70" viewBox="14 125 72 70">
<rect x="17.5" y="131.5" width="28" height="17" fill="#f6a95c" stroke="#111" stroke-width="1.3"/>
<rect x="28.5" y="131.5" width="6.5" height="6" fill="#f4e6d2" stroke="#111" stroke-width="1.1"/>
<path d="M46 158.6 L64 141.5 M46 158.6 H64.5 M46 158.6 L64 175.5" stroke="#0a0a0a" stroke-width="1.4" fill="none"/>
<path d="M60.5 140.3 L65.5 140.8 L64.6 145.5 Z M61.5 155.6 L66 158.6 L61.5 161.6 Z M60.5 176.8 L65.5 176.3 L64.6 171.6 Z" fill="#0a0a0a" stroke="#0a0a0a" stroke-width="0.8"/>
<line x1="32" y1="173" x2="32" y2="185" stroke="#111" stroke-width="3"/>
<line x1="32" y1="173" x2="32" y2="185" stroke="#b9cde2" stroke-width="1.2"/>
<line x1="29" y1="180" x2="35" y2="180" stroke="#111" stroke-width="1.2"/>
<rect x="28.6" y="184" width="6.8" height="7.6" fill="#e8434a" stroke="#111" stroke-width="1.2"/>
<line x1="31" y1="186.2" x2="31" y2="189.4" stroke="#f9b9bb" stroke-width="0.8"/>
<line x1="33" y1="186.2" x2="33" y2="189.4" stroke="#f9b9bb" stroke-width="0.8"/>
<circle cx="31.9" cy="158.6" r="14.8" fill="#b9cde2" stroke="#111" stroke-width="1.5"/>
<clipPath id="lc"><circle cx="31.9" cy="158.6" r="11.6"/></clipPath>
<g clip-path="url(#lc)">
<rect x="18" y="145" width="28" height="13.6" fill="#f6d4b2"/>
<rect x="18" y="158.6" width="28" height="14" fill="#d5eef3"/>
<path d="M22 170 L40 162" stroke="#bfe3ea" stroke-width="3"/>
<line x1="18" y1="158.6" x2="46" y2="158.6" stroke="#111" stroke-width="1.2"/>
</g>
<circle cx="31.9" cy="158.6" r="11.6" fill="none" stroke="#111" stroke-width="1.2"/>
<rect x="36" y="152" width="6.5" height="4.2" fill="#f6f6f6" stroke="#111" stroke-width="1.1"/>
<circle cx="71.8" cy="135.7" r="8.5" fill="#f6cf2a" stroke="#0c0c0c" stroke-width="1.7"/>
<circle cx="71.9" cy="158.7" r="8.5" fill="#e53c43" stroke="#0c0c0c" stroke-width="1.7"/>
<circle cx="71.9" cy="182" r="8.5" fill="#1f72d4" stroke="#0c0c0c" stroke-width="1.7"/>
<path d="M69 139.6V134.6a2.75 2.75 0 0 1 5.5 0V139.6M69 136.6H74.5" fill="none" stroke="#0c0c0c" stroke-width="3" stroke-linejoin="round" stroke-linecap="round"/>
<path d="M69 139.2V134.6a2.75 2.75 0 0 1 5.5 0V139.2" fill="none" stroke="#f9e6a0" stroke-width="0.6"/>
<path d="M69.3 155.6H72.2a1.6 1.6 0 0 1 0 3.2H69.3zM69.3 158.8H72.6a1.7 1.7 0 0 1 0 3.4H69.3z" fill="none" stroke="#0c0c0c" stroke-width="2.8" stroke-linejoin="round"/>
<path d="M70.4 157.2H72.3M70.4 160.5H72.6" stroke="#f6a0a4" stroke-width="0.6"/>
<path d="M74.6 179.4a3.6 3.8 0 1 0 0 5.3" fill="none" stroke="#0c0c0c" stroke-width="3" stroke-linecap="round"/>
<path d="M74.6 179.4a3.6 3.8 0 1 0 0 5.3" fill="none" stroke="#8cc0f0" stroke-width="0.5"/>
</svg>
<div class="t" style="left:22.7px;top:49.74px;font-size:8.7px;font-weight:400;color:#3d3d3d;letter-spacing:0px;transform:scaleX(0.89);transform-origin:0 0;">Colar</div>
<div class="t" style="left:6px;top:77.07px;font-size:7.95px;font-weight:400;color:#505050;letter-spacing:-0.05px;transform:scaleX(0.9);transform-origin:0 0;">Área de Transferência</div>
<div class="t" style="left:152.5px;top:77.28px;font-size:7.7px;font-weight:400;color:#505050;letter-spacing:-0.1px;transform:scaleX(0.9);transform-origin:0 0;">Fonte</div>
<div class="t" style="left:286px;top:77.28px;font-size:7.7px;font-weight:400;color:#505050;letter-spacing:-0.05px;transform:scaleX(0.9);transform-origin:0 0;">Alinhamento</div>
<div class="t" style="left:411.6px;top:77.28px;font-size:7.7px;font-weight:400;color:#505050;letter-spacing:0px;transform:scaleX(0.9);transform-origin:0 0;">Número</div>
<div class="t" style="left:553.5px;top:77.28px;font-size:7.7px;font-weight:400;color:#505050;letter-spacing:-0.1px;transform:scaleX(0.9);transform-origin:0 0;">Estilos</div>
<div class="t" style="left:668.7px;top:77.28px;font-size:7.7px;font-weight:400;color:#505050;letter-spacing:-0.1px;transform:scaleX(0.9);transform-origin:0 0;">Células</div>
<div class="t" style="left:768px;top:77.28px;font-size:7.7px;font-weight:400;color:#505050;letter-spacing:-0.1px;transform:scaleX(0.9);transform-origin:0 0;">Edição</div>
<div class="t" style="left:851px;top:77.28px;font-size:7.7px;font-weight:400;color:#505050;letter-spacing:-0.05px;transform:scaleX(0.9);transform-origin:0 0;">Suplementos</div>
<div class="r" style="left:93.5px;top:27.5px;width:77.1px;height:16px;border:1px solid #b4b4b4;border-radius:3.5px;box-sizing:border-box;background:#fff;"></div>
<div class="r" style="left:172.6px;top:27.5px;width:33.30000000000001px;height:16px;border:1px solid #b4b4b4;border-radius:3.5px;box-sizing:border-box;background:#fff;"></div>
<div class="r" style="left:381.8px;top:27.5px;width:96.80000000000001px;height:16px;border:1px solid #b4b4b4;border-radius:3.5px;box-sizing:border-box;background:#fff;"></div>
<div class="t" style="left:95.5px;top:31.72px;font-size:8.6px;font-weight:400;color:#333;letter-spacing:-0.1px;">Calibri</div>
<div class="t" style="left:174.5px;top:31.72px;font-size:8.6px;font-weight:400;color:#333;">12</div>
<div class="t" style="left:383.5px;top:31.72px;font-size:8.6px;font-weight:400;color:#333;letter-spacing:-0.1px;">Geral</div>
<div class="t" style="left:97.6px;top:52.52px;font-size:8.6px;font-weight:700;color:#222;">N</div>
<div class="t" style="left:116.2px;top:52.35px;font-size:8.8px;font-weight:400;color:#333;font-family:'Liberation Serif',serif;font-style:italic;">I</div>
<div class="t" style="left:133.6px;top:52.43px;font-size:8px;font-weight:400;color:#333;">S</div>
<div class="t" style="left:494.4px;top:49.04px;font-size:8.7px;font-weight:400;color:#3d3d3d;letter-spacing:0px;transform:scaleX(0.89);transform-origin:0 0;">Formatação</div>
<div class="t" style="left:490.5px;top:59.54px;font-size:8.7px;font-weight:400;color:#3d3d3d;letter-spacing:0px;transform:scaleX(0.89);transform-origin:0 0;">Condicional</div>
<div class="t" style="left:544.7px;top:49.04px;font-size:8.7px;font-weight:400;color:#3d3d3d;letter-spacing:0px;transform:scaleX(0.89);transform-origin:0 0;">Formatar como</div>
<div class="t" style="left:557px;top:59.54px;font-size:8.7px;font-weight:400;color:#3d3d3d;letter-spacing:0px;transform:scaleX(0.89);transform-origin:0 0;">Tabela</div>
<div class="t" style="left:603px;top:49.04px;font-size:8.7px;font-weight:400;color:#3d3d3d;letter-spacing:0px;transform:scaleX(0.89);transform-origin:0 0;">Estilos de</div>
<div class="t" style="left:605px;top:59.54px;font-size:8.7px;font-weight:400;color:#3d3d3d;letter-spacing:0px;transform:scaleX(0.89);transform-origin:0 0;">Célula</div>
<div class="t" style="left:665.7px;top:27.24px;font-size:8.7px;font-weight:400;color:#3d3d3d;letter-spacing:0px;transform:scaleX(0.89);transform-origin:0 0;">Inserir</div>
<div class="t" style="left:666px;top:44.24px;font-size:8.7px;font-weight:400;color:#3d3d3d;letter-spacing:0px;transform:scaleX(0.89);transform-origin:0 0;">Excluir</div>
<div class="t" style="left:666px;top:61.24px;font-size:8.7px;font-weight:400;color:#3d3d3d;letter-spacing:0px;transform:scaleX(0.89);transform-origin:0 0;">Formatar</div>
<div class="t" style="left:751px;top:48.74px;font-size:8.7px;font-weight:400;color:#3d3d3d;letter-spacing:0px;transform:scaleX(0.89);transform-origin:0 0;">Classificar</div>
<div class="t" style="left:751.8px;top:59.64px;font-size:8.7px;font-weight:400;color:#3d3d3d;letter-spacing:0px;transform:scaleX(0.89);transform-origin:0 0;">e Filtrar</div>
<div class="t" style="left:793.7px;top:48.74px;font-size:8.7px;font-weight:400;color:#3d3d3d;letter-spacing:0px;transform:scaleX(0.89);transform-origin:0 0;">Localizar e</div>
<div class="t" style="left:790.7px;top:59.64px;font-size:8.7px;font-weight:400;color:#3d3d3d;letter-spacing:0px;transform:scaleX(0.89);transform-origin:0 0;">Selecionar</div>
<div class="t" style="left:848.4px;top:48.74px;font-size:8.7px;font-weight:400;color:#3d3d3d;letter-spacing:0px;transform:scaleX(0.89);transform-origin:0 0;">Suplementos</div>
<div class="t" style="left:429px;top:53.47px;font-size:7px;font-weight:400;color:#8a8a8a;letter-spacing:-0.4px;">000</div>
<svg class="r" style="left:0;top:20px" width="1024" height="70" viewBox="0 20 1024 70"><line x1="87.5" y1="23" x2="87.5" y2="83" stroke="#dcdcdc" stroke-width="1"/><line x1="245.1" y1="23" x2="245.1" y2="83" stroke="#dcdcdc" stroke-width="1"/><line x1="377.5" y1="23" x2="377.5" y2="83" stroke="#dcdcdc" stroke-width="1"/><line x1="483.5" y1="23" x2="483.5" y2="83" stroke="#dcdcdc" stroke-width="1"/><line x1="643.9" y1="23" x2="643.9" y2="83" stroke="#dcdcdc" stroke-width="1"/><line x1="716.9" y1="23" x2="716.9" y2="83" stroke="#dcdcdc" stroke-width="1"/><line x1="842.2" y1="23" x2="842.2" y2="83" stroke="#dcdcdc" stroke-width="1"/><line x1="902.0" y1="23" x2="902.0" y2="83" stroke="#dcdcdc" stroke-width="1"/><line x1="155.9" y1="49.7" x2="155.9" y2="64.5" stroke="#dcdcdc" stroke-width="1"/><line x1="185" y1="49.7" x2="185" y2="64.5" stroke="#dcdcdc" stroke-width="1"/><line x1="340.2" y1="27" x2="340.2" y2="71" stroke="#dcdcdc" stroke-width="1"/><line x1="444" y1="50" x2="444" y2="64.5" stroke="#dcdcdc" stroke-width="1"/><path d="M80 83.5V78h5.5" fill="none" stroke="#666" stroke-width="0.8"/><path d="M82 80l3.2 3.2M85.4 80.6v2.8h-2.8" fill="none" stroke="#444" stroke-width="0.8"/><path d="M237 83.5V78h5.5" fill="none" stroke="#666" stroke-width="0.8"/><path d="M239 80l3.2 3.2M242.4 80.6v2.8h-2.8" fill="none" stroke="#444" stroke-width="0.8"/><path d="M368.6 83.5V78h5.5" fill="none" stroke="#666" stroke-width="0.8"/><path d="M370.6 80l3.2 3.2M374.0 80.6v2.8h-2.8" fill="none" stroke="#444" stroke-width="0.8"/><path d="M476.2 83.5V78h5.5" fill="none" stroke="#666" stroke-width="0.8"/><path d="M478.2 80l3.2 3.2M481.59999999999997 80.6v2.8h-2.8" fill="none" stroke="#444" stroke-width="0.8"/><rect x="25.4" y="28.4" width="13.6" height="16" fill="#fff" stroke="#e9a245" stroke-width="1.3"/><path d="M28 30.4V28.8L32.5 25.3L37 28.8V30.4Z" fill="#fff" stroke="#7a7a7a" stroke-width="0.9" stroke-linejoin="round"/><rect x="34" y="33.4" width="9" height="12" fill="#fff" stroke="#555" stroke-width="1"/><path d="M30.38 63.3l1.52 1.52 1.52 -1.52" fill="none" stroke="#3a3a3a" stroke-width="1"/><path d="M53.5 25.5L58 33M58.3 25.5L53.8 33" stroke="#555" stroke-width="0.9" fill="none"/><circle cx="53.6" cy="34.3" r="1.5" fill="#5aa0d8"/><circle cx="58.2" cy="34.3" r="1.5" fill="#5aa0d8"/><path d="M53 50.5h-2.5V43h4.5l1.2 1.2" fill="none" stroke="#555" stroke-width="0.95"/><path d="M54.5 45h4.2l2 2v5.6h-6.2z" fill="#fff" stroke="#555" stroke-width="0.95"/><path d="M56.3 49.5h2.5M56.3 51h2.5" stroke="#aaa" stroke-width="0.6"/><path d="M66.67999999999999 47.099999999999994l1.52 1.52 1.52 -1.52" fill="none" stroke="#3a3a3a" stroke-width="1"/><path d="M50.4 66.6L54.8 62.2L58.4 65.8L54 70.2Z" fill="#f5b25a"/><path d="M52 67.6l3.6-3.6M53.6 69l3.4-3.4" stroke="#fde3bd" stroke-width="0.7"/><path d="M54.6 61.6L59 66L60.6 64.4L56.2 60Z" fill="#4a4a4a"/><path d="M58.2 61.8L61.4 58.6" stroke="#4a4a4a" stroke-width="1.8" stroke-linecap="round"/><path d="M164.98 34.599999999999994l1.52 1.52 1.52 -1.52" fill="none" stroke="#3a3a3a" stroke-width="1"/><path d="M200.18 34.599999999999994l1.52 1.52 1.52 -1.52" fill="none" stroke="#3a3a3a" stroke-width="1"/><path d="M472.88 34.599999999999994l1.52 1.52 1.52 -1.52" fill="none" stroke="#3a3a3a" stroke-width="1"/><path d="M218.2 32.2l1.3-1.3 1.3 1.3" fill="none" stroke="#2f8fd6" stroke-width="0.9"/><path d="M235 31.3l1.2 1.2 1.2-1.2" fill="none" stroke="#2f8fd6" stroke-width="0.9"/><path d="M210.4 39.4L214.5 30.4L218.6 39.4M211.9 36.1H217.1" fill="none" stroke="#4a4a4a" stroke-width="1"/><path d="M228.6 39.4L231.7 32.6L234.8 39.4M229.7 36.9H233.7" fill="none" stroke="#4a4a4a" stroke-width="0.95"/><path d="M218.2 58.8L221.8 51.6L225.4 58.8M219.4 56.3H224.2" fill="none" stroke="#333" stroke-width="1"/><line x1="133.8" y1="60.8" x2="138.6" y2="60.8" stroke="#333" stroke-width="0.8"/><path d="M147.38 56.599999999999994l1.52 1.52 1.52 -1.52" fill="none" stroke="#3a3a3a" stroke-width="1"/><path d="M176.38 56.599999999999994l1.52 1.52 1.52 -1.52" fill="none" stroke="#3a3a3a" stroke-width="1"/><path d="M205.68 56.599999999999994l1.52 1.52 1.52 -1.52" fill="none" stroke="#3a3a3a" stroke-width="1"/><path d="M233.18 56.599999999999994l1.52 1.52 1.52 -1.52" fill="none" stroke="#3a3a3a" stroke-width="1"/><rect x="160.5" y="52.3" width="9.4" height="9" fill="none" stroke="#555" stroke-width="0.9"/><path d="M165.2 52.3v9M160.5 56.8h9.4" stroke="#555" stroke-width="0.8"/><path d="M190.5 56.5l3.8-3.8 3.6 3.6-3.8 3.2h-1.6z" fill="#fff" stroke="#444" stroke-width="0.9"/><path d="M197.6 55.2c0.9 0.8 1.2 1.8 0.6 2.2" fill="none" stroke="#2f8fd6" stroke-width="0.9"/><rect x="189.7" y="59.9" width="9.8" height="2.4" fill="#f4f4f4" stroke="#999" stroke-width="0.5"/><rect x="216.2" y="60.2" width="11.3" height="2.3" fill="#111"/><line x1="254.6" y1="30.5" x2="264.2" y2="30.5" stroke="#6a6a6a" stroke-width="0.95"/><line x1="256.15" y1="32.8" x2="262.65" y2="32.8" stroke="#6a6a6a" stroke-width="0.95"/><line x1="254.6" y1="35.1" x2="264.2" y2="35.1" stroke="#6a6a6a" stroke-width="0.95"/><line x1="271.2" y1="32" x2="280.8" y2="32" stroke="#6a6a6a" stroke-width="0.95"/><line x1="272.75" y1="34.3" x2="279.25" y2="34.3" stroke="#6a6a6a" stroke-width="0.95"/><line x1="271.2" y1="36.6" x2="280.8" y2="36.6" stroke="#6a6a6a" stroke-width="0.95"/><rect x="285.3" y="27.3" width="16.4" height="16.3" rx="2.8" fill="#ebebeb" stroke="#8a8a8a" stroke-width="0.8"/><line x1="288.7" y1="35.8" x2="298.3" y2="35.8" stroke="#6a6a6a" stroke-width="0.95"/><line x1="290.25" y1="38.1" x2="296.75" y2="38.1" stroke="#6a6a6a" stroke-width="0.95"/><line x1="288.7" y1="40.4" x2="298.3" y2="40.4" stroke="#6a6a6a" stroke-width="0.95"/><text x="305" y="35.3" font-family="Liberation Sans" font-size="6.2" fill="#555" transform="rotate(-30 309 33)">ab</text><path d="M309 38.5l7-6.2M313.5 32.2h2.8v2.8" fill="none" stroke="#2f8fd6" stroke-width="0.9"/><path d="M320.38 34.599999999999994l1.52 1.52 1.52 -1.52" fill="none" stroke="#3a3a3a" stroke-width="1"/><line x1="254.4" y1="52.6" x2="264.0" y2="52.6" stroke="#6a6a6a" stroke-width="0.95"/><line x1="254.4" y1="55" x2="260.9" y2="55" stroke="#6a6a6a" stroke-width="0.95"/><line x1="254.4" y1="57.4" x2="264.0" y2="57.4" stroke="#6a6a6a" stroke-width="0.95"/><line x1="254.4" y1="59.8" x2="260.9" y2="59.8" stroke="#6a6a6a" stroke-width="0.95"/><line x1="271.2" y1="52.6" x2="280.8" y2="52.6" stroke="#6a6a6a" stroke-width="0.95"/><line x1="272.75" y1="55" x2="279.25" y2="55" stroke="#6a6a6a" stroke-width="0.95"/><line x1="271.2" y1="57.4" x2="280.8" y2="57.4" stroke="#6a6a6a" stroke-width="0.95"/><line x1="272.75" y1="59.8" x2="279.25" y2="59.8" stroke="#6a6a6a" stroke-width="0.95"/><line x1="288.2" y1="52.6" x2="297.8" y2="52.6" stroke="#6a6a6a" stroke-width="0.95"/><line x1="291.3" y1="55" x2="297.8" y2="55" stroke="#6a6a6a" stroke-width="0.95"/><line x1="288.2" y1="57.4" x2="297.8" y2="57.4" stroke="#6a6a6a" stroke-width="0.95"/><line x1="291.3" y1="59.8" x2="297.8" y2="59.8" stroke="#6a6a6a" stroke-width="0.95"/><line x1="306" y1="52.6" x2="315.8" y2="52.6" stroke="#6a6a6a" stroke-width="0.95"/><line x1="309.5" y1="55" x2="315.8" y2="55" stroke="#6a6a6a" stroke-width="0.95"/><line x1="309.5" y1="57.4" x2="315.8" y2="57.4" stroke="#6a6a6a" stroke-width="0.95"/><line x1="306" y1="59.8" x2="315.8" y2="59.8" stroke="#6a6a6a" stroke-width="0.95"/><path d="M309 56.2h-3M306.6 54.8l-1.3 1.4 1.3 1.4" fill="none" stroke="#2f8fd6" stroke-width="0.9"/><line x1="323" y1="52.6" x2="332.8" y2="52.6" stroke="#6a6a6a" stroke-width="0.95"/><line x1="326.5" y1="55" x2="332.8" y2="55" stroke="#6a6a6a" stroke-width="0.95"/><line x1="326.5" y1="57.4" x2="332.8" y2="57.4" stroke="#6a6a6a" stroke-width="0.95"/><line x1="323" y1="59.8" x2="332.8" y2="59.8" stroke="#6a6a6a" stroke-width="0.95"/><path d="M323 56.2h3M324.8 54.8l1.3 1.4-1.3 1.4" fill="none" stroke="#2f8fd6" stroke-width="0.9"/><text x="348.5" y="35" font-family="Liberation Sans" font-size="6.4" fill="#555">ab</text><text x="347.6" y="40.8" font-family="Liberation Sans" font-size="6.4" fill="#555">c</text><path d="M358 36c0 2.5-1.2 3.5-3.5 3.5M355.8 38l-1.6 1.5 1.6 1.5" fill="none" stroke="#2f8fd6" stroke-width="0.9"/><rect x="346.8" y="51.2" width="10.5" height="10.5" fill="#cfe3f5" stroke="#3d5a7a" stroke-width="0.9"/><path d="M346.8 54.5h10.5M346.8 58.4h10.5" stroke="#3d5a7a" stroke-width="0.6"/><path d="M348.5 56.5h7M349.8 55.3l-1.3 1.2 1.3 1.2M354.2 55.3l1.3 1.2-1.3 1.2" fill="none" stroke="#2f8fd6" stroke-width="0.7"/><path d="M363.38 56.599999999999994l1.52 1.52 1.52 -1.52" fill="none" stroke="#3a3a3a" stroke-width="1"/><rect x="384.3" y="53.6" width="11.2" height="7.6" fill="#8a8a8a" stroke="#555" stroke-width="0.8"/><rect x="386" y="55.3" width="7.8" height="4.2" fill="#bdbdbd"/><path d="M387 57.4h1.5M389.5 57.4h1.5" stroke="#666" stroke-width="0.8"/><circle cx="392.2" cy="60.6" r="2.6" fill="#f2a341" stroke="#d27a22" stroke-width="0.6"/><path d="M391.2 60.6h2" stroke="#fff" stroke-width="0.6"/><path d="M400.58 56.599999999999994l1.52 1.52 1.52 -1.52" fill="none" stroke="#3a3a3a" stroke-width="1"/><ellipse cx="414.2" cy="54.8" rx="1.7" ry="2" fill="none" stroke="#555" stroke-width="1.1"/><ellipse cx="420.6" cy="59.6" rx="1.7" ry="2" fill="none" stroke="#555" stroke-width="1.1"/><path d="M421.6 52.2L413.2 62.2" stroke="#555" stroke-width="1"/><text x="452.8" y="57.2" font-family="Liberation Sans" font-size="6" letter-spacing="-0.3" fill="#666">.0</text><text x="450.8" y="62.4" font-family="Liberation Sans" font-size="6" letter-spacing="-0.3" fill="#666">.00</text><path d="M453 54.6h-4.2M450.2 53.2l-1.5 1.4 1.5 1.4" fill="none" stroke="#2f8fd6" stroke-width="0.9"/><text x="467.4" y="57.2" font-family="Liberation Sans" font-size="6" letter-spacing="-0.3" fill="#666">.00</text><text x="471.4" y="62.4" font-family="Liberation Sans" font-size="6" letter-spacing="-0.3" fill="#666">.0</text><path d="M465.3 60.2h4.8M468.6 58.8l1.5 1.4-1.5 1.4" fill="none" stroke="#2f8fd6" stroke-width="0.9"/><rect x="506.3" y="27.6" width="19" height="15" rx="1" fill="#fff" stroke="#6a6a6a" stroke-width="0.9"/><rect x="509.2" y="28.6" width="10" height="3.6" fill="#eaa0a4" stroke="#d9363e" stroke-width="0.6" stroke-dasharray="0.8 0.5"/><rect x="509.2" y="37.8" width="10" height="3.6" fill="#eaa0a4" stroke="#d9363e" stroke-width="0.6" stroke-dasharray="0.8 0.5"/><rect x="509.2" y="33.3" width="3.4" height="3.4" fill="#6aa6dc"/><path d="M506.3 32.6h19M506.3 37.4h19M512.8 27.6v15M519.2 27.6v15" stroke="#7a7a7a" stroke-width="0.6"/><rect x="509.2" y="28.6" width="10" height="3.6" fill="#eaa0a4" opacity="0.85"/><rect x="509.2" y="37.8" width="10" height="3.6" fill="#eaa0a4" opacity="0.85"/><rect x="562.2" y="27.6" width="19.4" height="15" rx="1" fill="#fff" stroke="#6a6a6a" stroke-width="0.9"/><rect x="568.8" y="32.6" width="12.8" height="10" fill="#8ec0ea"/><path d="M562.2 32.6h19.4M562.2 37.6h19.4M568.8 27.6v15M575.2 27.6v15" stroke="#7a7a7a" stroke-width="0.6"/><path d="M568.8 37.6h12.8M575.2 32.6v10" stroke="#3d6fb0" stroke-width="0.6" stroke-dasharray="0.8 0.6"/><path d="M570.4000000000001 42.0L582.6 32.6L584.0 34.0L571.8000000000001 43.400000000000006z" fill="#fff" stroke="#666" stroke-width="0.7"/><path d="M568.2 45.2c0.3-2 1.2-3.6 2.4-4.2l2.8 2.8c-0.6 1.2-2.2 2.2-5.2 1.4z" fill="#5aa0dc" stroke="#3d7fc0" stroke-width="0.5"/><rect x="610.8" y="27.6" width="19.2" height="15" rx="1" fill="#fff" stroke="#6a6a6a" stroke-width="0.9"/><rect x="612.3" y="30.3" width="16.2" height="10.8" fill="#8ec0ea"/><path d="M610.8 30.2h19.2" stroke="#7a7a7a" stroke-width="0.7"/><path d="M612.3 37.6h16.2" stroke="#3d6fb0" stroke-width="0.6" stroke-dasharray="0.8 0.6"/><path d="M618.8000000000001 42.0L631.0 32.6L632.4 34.0L620.2 43.400000000000006z" fill="#fff" stroke="#666" stroke-width="0.7"/><path d="M616.6 45.2c0.3-2 1.2-3.6 2.4-4.2l2.8 2.8c-0.6 1.2-2.2 2.2-5.2 1.4z" fill="#5aa0dc" stroke="#3d7fc0" stroke-width="0.5"/><path d="M536.64 62.599999999999994l1.36 1.36 1.36 -1.36" fill="none" stroke="#3a3a3a" stroke-width="1"/><path d="M583.34 62.599999999999994l1.36 1.36 1.36 -1.36" fill="none" stroke="#3a3a3a" stroke-width="1"/><path d="M630.34 62.599999999999994l1.36 1.36 1.36 -1.36" fill="none" stroke="#3a3a3a" stroke-width="1"/><rect x="652.4" y="26.1" width="10.2" height="8.6" fill="#fff" stroke="#555" stroke-width="1"/><rect x="653.2" y="28.4" width="8.6" height="4" fill="#8ec3ea"/><circle cx="659.8" cy="30.4" r="1.2" fill="#1f5fa8"/><path d="M653.5 29.3h4M653.5 31.5h4" stroke="#e8f3fb" stroke-width="0.5"/><rect x="652.4" y="42.8" width="10.2" height="8.6" fill="#fff" stroke="#555" stroke-width="1"/><rect x="653.2" y="45.1" width="8.6" height="4" fill="#f4f4f4"/><circle cx="655.6" cy="47.1" r="1.9" fill="#3b80c8"/><path d="M659.2 45.6l2.6 2.9M661.8 45.6l-2.6 2.9" stroke="#d9363e" stroke-width="0.9"/><rect x="652.4" y="58.6" width="10.2" height="9.8" fill="#cfe3f5" stroke="#555" stroke-width="1"/><rect x="654.6" y="60.8" width="5.8" height="5.4" fill="#5d9fd8"/><path d="M652.4 60.6h10.2M652.4 66.4h10.2" stroke="#777" stroke-width="0.5" stroke-dasharray="0.7 0.5"/><path d="M695.88 29.900000000000002l1.52 1.52 1.52 -1.52" fill="none" stroke="#3a3a3a" stroke-width="1"/><path d="M697.58 46.9l1.52 1.52 1.52 -1.52" fill="none" stroke="#3a3a3a" stroke-width="1"/><path d="M700.38 63.699999999999996l1.52 1.52 1.52 -1.52" fill="none" stroke="#3a3a3a" stroke-width="1"/><path d="M741.58 30.5l1.52 1.52 1.52 -1.52" fill="none" stroke="#3a3a3a" stroke-width="1"/><path d="M741.58 47.8l1.52 1.52 1.52 -1.52" fill="none" stroke="#3a3a3a" stroke-width="1"/><path d="M740.88 64.8l1.52 1.52 1.52 -1.52" fill="none" stroke="#3a3a3a" stroke-width="1"/><rect x="724.6" y="42.4" width="10.8" height="9.4" fill="#fff" stroke="#555" stroke-width="0.9"/><path d="M724.6 44.6h10.8" stroke="#555" stroke-width="0.7"/><path d="M730 46v4.3M728.3 48.7l1.7 1.7 1.7-1.7" fill="none" stroke="#2f8fd6" stroke-width="0.9"/><path d="M725.5 65.8l5.5-5.8 4 3.5-5.5 5.8z" fill="#f4eaf7" stroke="#9b4fb3" stroke-width="1"/><path d="M728.2 62.9l4 3.5" stroke="#9b4fb3" stroke-width="0.9"/><path d="M769.4 30.6h10l-3.9 4.6v5.6h-2.2v-5.6z" fill="none" stroke="#555" stroke-width="1" stroke-linejoin="round"/><path d="M734.4 25.6H726.2L730.6 30L726.2 34.4H734.6" fill="none" stroke="#555" stroke-width="1"/><path d="M759.9 33.8L763.1 26.2L766.3 33.8M761 31.3H765.2" fill="none" stroke="#2f8fd6" stroke-width="0.95"/><path d="M760 35.8H766L760 43.4H766.4" fill="none" stroke="#555" stroke-width="1"/><circle cx="815.2" cy="32.8" r="7.4" fill="none" stroke="#555" stroke-width="1"/><path d="M809.8 38.2l-6.8 7" stroke="#555" stroke-width="1.1"/><path d="M781.84 62.599999999999994l1.36 1.36 1.36 -1.36" fill="none" stroke="#3a3a3a" stroke-width="1"/><path d="M830.84 62.599999999999994l1.36 1.36 1.36 -1.36" fill="none" stroke="#3a3a3a" stroke-width="1"/><rect x="862.3" y="25.3" width="19" height="19" fill="#fbe9e0" stroke="#c87a5a" stroke-width="1"/><rect x="864.8" y="27.8" width="6" height="6" fill="#fff" stroke="#c04040" stroke-width="0.8"/><rect x="872.8" y="27.8" width="6" height="6" fill="#fff" stroke="#c04040" stroke-width="0.8"/><rect x="864.8" y="35.8" width="6" height="6" fill="#fff" stroke="#c04040" stroke-width="0.8"/><rect x="872.8" y="35.8" width="6" height="6" fill="#fff" stroke="#c04040" stroke-width="0.8"/><path d="M999 81.8l3.3-3.5 3.3 3.5" fill="none" stroke="#444" stroke-width="1"/></svg>
</body></html>
